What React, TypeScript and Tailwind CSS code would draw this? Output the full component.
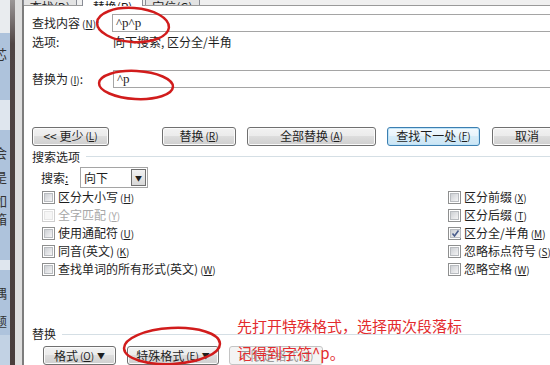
import React from 'react';

const CJK = "font-['Noto_Sans_CJK_SC','Noto_Sans',sans-serif]";

const Key = ({ k }: { k: string }) => (
    <span className="text-[10px] ml-[2px]">(<span className="underline">{k}</span>)</span>
);

const Btn = ({ children, w, focus, disabled, arrow }: { children: React.ReactNode; w: string; focus?: boolean; disabled?: boolean; arrow?: boolean }) => {
    const skin = focus
        ? 'border-[#3c7fb1] bg-[linear-gradient(#f4fafe,#e6f3fb_50%,#d6ecf8_50%,#cbe5f4)] shadow-[inset_0_0_0_1px_#bfe3f7]'
        : disabled
            ? 'border-[#c4c4c4] bg-[#f4f4f4] text-[#9a9a9a]'
            : 'border-[#707070] bg-[linear-gradient(#f2f2f2,#ebebeb_50%,#dddddd_50%,#cfcfcf)] shadow-[inset_0_0_0_1px_#fbfbfb]';
    return (
        <div className={`${w} h-[19px] shrink-0 rounded-[3px] border flex items-center justify-center text-[12px] leading-none whitespace-nowrap ${skin}`}>
            {children}
            {arrow && <span className="ml-[3px] text-[8px]">▼</span>}
        </div>
    );
};

const Check = ({ checked, disabled }: { checked?: boolean; disabled?: boolean }) => (
    <span className={`w-[13px] h-[13px] shrink-0 border p-[1px] flex ${disabled ? 'border-[#cfcfcf]' : 'border-[#8e8f8f]'}`}>
        <span className={`flex-1 flex items-center justify-center border ${disabled ? 'border-[#e6e6e6] bg-[#f6f6f6]' : 'border-[#b9bcc0] bg-[linear-gradient(135deg,#cdd0d4,#f4f4f5)]'}`}>
            {checked && (
                <svg width="9" height="9" viewBox="0 0 9 9">
                    <path d="M1.5 4.5 L3.5 7 L7.5 1.5" fill="none" stroke="#4a5d8c" strokeWidth="1.6" />
                </svg>
            )}
        </span>
    </span>
);

const CheckRow = ({ label, k, checked, disabled }: { label: string; k: string; checked?: boolean; disabled?: boolean }) => (
    <div className="h-[18px] flex items-center whitespace-nowrap">
        <Check checked={checked} disabled={disabled} />
        <span className={`ml-[3px] text-[12px] ${disabled ? 'text-[#a8a8a8]' : 'text-[#1e1e1e]'}`}>
            {label}<Key k={k} />
        </span>
    </div>
);

const GroupTitle = ({ title, className }: { title: string; className: string }) => (
    <div className={`h-[20px] pl-[8px] flex items-center ${className}`}>
        <span className="text-[12px] mr-[6px]">{title}</span>
        <div className="flex-1 h-px bg-[#d5dfe5]" />
    </div>
);

const Strip = () => (
    <div className="w-[24px] shrink-0 flex">
        <div className="w-[10px] overflow-hidden flex flex-col text-[13px] leading-[18px] text-[#333]">
            <div className="h-[33px] bg-[#e9ecef]" />
            <div className="h-[67px] bg-[#aec3dc] pt-[12px] -ml-[6px]">芯</div>
            <div className="h-[30px] bg-[#dfe6ee]" />
            <div className="h-[130px] bg-[#aec3dc] -ml-[6px] pt-[14px]">
                <div>会</div><div className="mt-[6px]">是</div><div className="mt-[6px]">如</div><div>箱</div>
            </div>
            <div className="h-[10px] bg-[#dfe6ee]" />
            <div className="h-[65px] bg-[#aec3dc] -ml-[6px] pt-[14px]">
                <div>偶</div><div className="mt-[10px]">题</div>
            </div>
            <div className="flex-1 bg-[#c2d2e4]" />
        </div>
        <div className="w-[5px] bg-[linear-gradient(#9a9696,#4f4443_12%,#4a3e3c)]" />
        <div className="w-[7px] bg-[#dedede]" />
        <div className="w-[2px] bg-[#7d7d7d]" />
    </div>
);

export default function App() {
    return (
        <div className={`relative w-[550px] h-[365px] overflow-hidden bg-white flex text-[#1e1e1e] ${CJK}`}>
            <Strip />
            <div className="flex-1 min-w-0 flex flex-col">
                {/* tabs */}
                <div className="h-[6px] bg-[#f0f0f0] border-b border-[#9a9a9a] flex items-end text-[12px] leading-none overflow-visible">
                    <div className="ml-[-1px] w-[54px] h-[6px] overflow-hidden border-x border-[#898c95] bg-[#e3e3e3] flex items-end justify-center">
                        <span className="mb-[-8px]">查找(D)</span>
                    </div>
                    <div className="ml-[5px] w-[61px] h-[7px] -mb-px overflow-hidden border-x border-[#898c95] bg-white flex items-end justify-center">
                        <span className="mb-[-7px]">替换(P)</span>
                    </div>
                    <div className="ml-[2px] w-[55px] h-[6px] overflow-hidden border-x border-[#898c95] bg-[#e3e3e3] flex items-end justify-center">
                        <span className="mb-[-8px]">定位(G)</span>
                    </div>
                </div>

                {/* find */}
                <div className="mt-[8px] h-[18px] pl-[8px] flex items-center">
                    <span className="w-[80px] shrink-0 text-[12px] whitespace-nowrap">查找内容<Key k="N" />:</span>
                    <div className="w-[440px] h-[18px] shrink-0 border border-[#a5a5a5] border-r-[#555] flex items-center pl-[3px] font-['Liberation_Serif',serif] text-[13px]">^p^p</div>
                </div>
                <div className="h-[20px] pl-[8px] flex items-center text-[12px]">
                    <span className="w-[81px] shrink-0">选项:</span>
                    <span>向下搜索, 区分全/半角</span>
                </div>

                {/* replace */}
                <div className="mt-[18px] h-[18px] pl-[8px] flex items-center">
                    <span className="w-[81px] shrink-0 text-[12px] whitespace-nowrap">替换为<Key k="I" />:</span>
                    <div className="w-[440px] h-[18px] shrink-0 border border-[#a5a5a5] border-r-[#555] flex items-center pl-[3px] font-['Liberation_Serif',serif] text-[13px]">^p</div>
                </div>

                {/* buttons */}
                <div className="mt-[39px] pl-[8px] flex">
                    <Btn w="w-[77px]">&lt;&lt; 更少<Key k="L" /></Btn>
                    <div className="ml-[53px]"><Btn w="w-[74px]">替换<Key k="R" /></Btn></div>
                    <div className="ml-[11px]"><Btn w="w-[129px]">全部替换<Key k="A" /></Btn></div>
                    <div className="ml-[11px]"><Btn w="w-[93px]" focus>查找下一处<Key k="F" /></Btn></div>
                    <div className="ml-[12px]"><Btn w="w-[70px]">取消</Btn></div>
                </div>

                <GroupTitle title="搜索选项" className="mt-[1px]" />

                <div className="mt-[1px] h-[21px] pl-[17px] flex items-center text-[12px]">
                    <span className="w-[39px] shrink-0">搜索<span className="underline">:</span></span>
                    <div className="w-[68px] h-[21px] border border-[#a5a5a5] flex items-center">
                        <span className="flex-1 pl-[3px]">向下</span>
                        <div className="w-[15px] h-[17px] mr-[1px] border border-[#707070] bg-[linear-gradient(#f2f2f2,#d8d8d8)] flex items-center justify-center text-[7px]">▼</div>
                    </div>
                </div>

                <div className="flex">
                    <div className="pl-[18px] flex flex-col">
                        <CheckRow label="区分大小写" k="H" />
                        <CheckRow label="全字匹配" k="Y" disabled />
                        <CheckRow label="使用通配符" k="U" />
                        <CheckRow label="同音(英文)" k="K" />
                        <CheckRow label="查找单词的所有形式(英文)" k="W" />
                    </div>
                    <div className="ml-auto w-[102px] shrink-0 flex flex-col">
                        <CheckRow label="区分前缀" k="X" />
                        <CheckRow label="区分后缀" k="T" />
                        <CheckRow label="区分全/半角" k="M" checked />
                        <CheckRow label="忽略标点符号" k="S" />
                        <CheckRow label="忽略空格" k="W" />
                    </div>
                </div>

                <GroupTitle title="替换" className="mt-[46px]" />

                <div className="mt-[2px] pl-[19px] flex">
                    <Btn w="w-[73px]" arrow>格式<Key k="O" /></Btn>
                    <div className="ml-[11px]"><Btn w="w-[92px]" arrow>特殊格式<Key k="E" /></Btn></div>
                    <div className="ml-[10px]"><Btn w="w-[94px]" disabled>不限定格式<Key k="T" /></Btn></div>
                </div>
            </div>

            {/* annotation */}
            <div className="absolute left-[237px] top-[312px] text-[15px] leading-[27px] text-[#e32b2e] whitespace-nowrap">
                <div>先打开特殊格式，选择两次段落标</div>
                <div>记得到字符^p。</div>
            </div>
            <svg className="absolute inset-0 pointer-events-none" width="550" height="365">
                <ellipse cx="133" cy="25" rx="36" ry="17" fill="none" stroke="#d11c1c" strokeWidth="2.5" transform="rotate(4 133 25)" />
                <ellipse cx="136" cy="85" rx="37" ry="14" fill="none" stroke="#d11c1c" strokeWidth="2.5" transform="rotate(3 136 85)" />
                <ellipse cx="172" cy="346" rx="48" ry="18" fill="none" stroke="#d11c1c" strokeWidth="2.5" transform="rotate(-3 172 346)" />
            </svg>
        </div>
    );
}
